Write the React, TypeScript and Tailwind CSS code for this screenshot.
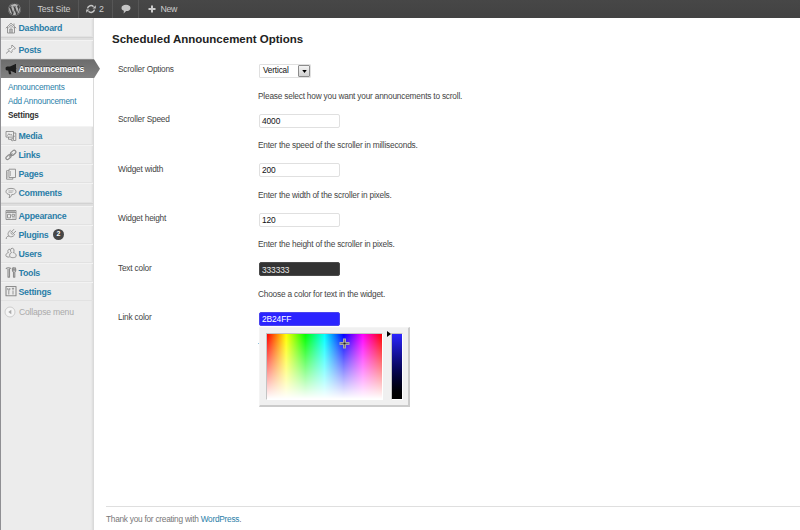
import type { ReactNode } from "react";
import { FaWordpress } from "react-icons/fa";

const svg = "h-[12px] w-[12px] shrink-0";

function Icon({ children }: { children: ReactNode }) {
  return (
    <svg viewBox="0 0 12 12" className={svg} fill="none" stroke="#8c8c8c" strokeWidth="0.9" strokeLinejoin="round">
      {children}
    </svg>
  );
}

const icons = {
  home: (
    <Icon>
      <path d="M.8 6.2 6 1.2l5.2 5M2.5 5v6h7V5M9 1.5v2.3" />
      <path d="M3.4 5.8 6 3.3l2.6 2.5M4.8 11V7h2.4v4" />
      <path d="M6 7v4M6 5v.8" />
    </Icon>
  ),
  pin: (
    <Icon>
      <path
        d="M7 1 10.500 4.300l-.9.7-.9-.3-1.700 1.700.1 1.500-.9.800-3.100-3.100.8-.9 1.500.1 1.700-1.700-.5-1zM4 6.900 1 9.500"
        fill="#f6f6f6"
      />
    </Icon>
  ),
  horn: (
    <svg viewBox="0 0 12 12" className={svg} fill="#1d1d1d">
      <path d="M10 1.200 5 3.600H2L.6 4.500v1.900l1.200 1.100h1.400l.8 3.700h2.300l-.8-3.400L10 9.800z" />
      <path d="M10.400 4.200c1.300.4 1.300 2 0 2.400zM10 1h1v9h-1z" />
    </svg>
  ),
  media: (
    <Icon>
      <path d="M1 1.500h7.500v5.600H1zM3.500 7v2.300h3M2.400 5.700l1.500-2 1.300 1.500 1-1 .8 1.500M8.500 3h2.300v7.500H8.500" />
      <circle cx="7.300" cy="9.700" r="1.100" />
      <path d="M8.400 9.500V5.800l1.400.6" />
    </Icon>
  ),
  link: (
    <Icon>
      <g strokeWidth="1.2">
        <rect x="5.2" y="2.1" width="6" height="3.4" rx="1.7" transform="rotate(-42 8.200 3.800)" />
        <rect x=".6" y="6.600" width="5.800" height="3" rx="1.500" transform="rotate(-42 3.500 8.100)" />
        <path d="m4.200 7.500 3.300-3" />
      </g>
    </Icon>
  ),
  pages: (
    <Icon>
      <path d="M4 1.200h6.500v8.300H4zM4 2.700H1.600v8.500h6.200V9.500" />
      <path d="M2.800 4v6M5.500 3v5" stroke="#b0b0b0" />
    </Icon>
  ),
  comment: (
    <Icon>
      <path d="M6 1.400c3 0 5 1.200 5 3.100S9.200 7.600 6.600 7.700c0 1.500-1 2.500-2.600 3 .6-1 .8-2 .6-3.100C2.400 7.300 1 6.200 1 4.500 1 2.600 3 1.400 6 1.400z" />
      <path d="M3.500 3.900h5M3.500 5.300h4" stroke="#aaa" />
    </Icon>
  ),
  appearance: (
    <Icon>
      <path d="M1 1.500h10v9H1zM1 3.500h10M2.500 5.300h3v3.600h-3zM7 5.300h2.600v2H7z" />
      <path d="M2 2.500h8M7 8.900h3" stroke="#aaa" />
    </Icon>
  ),
  plug: (
    <Icon>
      <path d="M5.200 2.400 9.600 6.800C8.100 8.900 5.600 9.400 4 8S2.800 4.200 5.200 2.400zM6.700 3.700 9 1.200M8.400 5.400 11 3M3.900 8.100C2.500 8 1.100 9 1.200 11M5.300 4.500l2.300 2.400" />
    </Icon>
  ),
  users: (
    <Icon>
      <path d="M6.500 5.600C4.900 4.400 5.200 1.200 7.200 1.200s2.500 3.200 1 4.400c1.900.3 3 1.500 3 3.300 0 2.100-5.600 2.300-6.400.6-.5-1.900.2-3.500 1.700-3.900zM5.100 2.300C3 1.600 2.200 4.300 3.400 5.700 1.800 6 .9 7 .9 8.500c0 1.100 1.600 1.700 3.600 1.600" />
    </Icon>
  ),
  tools: (
    <Icon>
      <path
        d="M.9 2.800C2 1.500 4.500 1.300 6.200 2.600M3 2.500v8.600h1.500V2.500M8.500 11.100V6C7 5.200 7 2.800 8.300 1.500v2.600h1.500V1.500c1.400 1.300 1.300 3.700 0 4.500v5.100z"
        strokeWidth="1.1"
      />
    </Icon>
  ),
  settings: (
    <Icon>
      <path d="M1 1.500h10v9.300H1z" strokeWidth="1.1" />
      <path d="M3.800 9.500V5.500M2.800 3v1.900h2V3M8 9.500v-4M6.900 3.300h2.200M8 3v2" />
    </Icon>
  ),
};

type Item = { icon: ReactNode; label: string; badge?: string };

function MenuItem({ icon, label, badge }: Item) {
  return (
    <div className="flex h-[19.1px] items-center border-b border-b-[#e2e2e2] border-t border-t-[#f3f3f3] pl-[3.5px] text-[8.8px] font-bold tracking-[-0.26px] text-[#2a7ea8]">
      {icon}
      <span className="ml-[2px] pt-[2px]">{label}</span>
      {badge && (
        <span className="ml-[4.5px] flex h-[11px] w-[11px] items-center justify-center rounded-full bg-[#464646] text-[7px] tracking-normal text-white">
          {badge}
        </span>
      )}
    </div>
  );
}

function Separator() {
  return <div className="h-[3px] border-t border-[#d2d2d2] bg-[#dedede]" />;
}

function Sidebar() {
  return (
    <nav className="flex w-[94px] shrink-0 flex-col border-l border-r border-l-[#8f8f93] border-r-[#dadada] bg-[#ececec] shadow-[inset_-2px_0_2px_-1px_#dcdcdc]">
      <MenuItem icon={icons.home} label="Dashboard" />
      <Separator />
      <MenuItem icon={icons.pin} label="Posts" />
      <div className="relative z-10 -mr-[7px] flex h-[19px] items-center bg-linear-to-b from-[#6b6b6b] to-[#828282] pl-[3.5px] text-[8.8px] font-bold tracking-[-0.26px] text-white [clip-path:polygon(0_0,93px_0,100%_50%,93px_100%,0_100%)]">
        {icons.horn}
        <span className="ml-[2px] pt-[1px] [text-shadow:0_-1px_0_#444]">Announcements</span>
      </div>
      <div className="flex h-[48px] flex-col bg-white pl-[7px] pt-[3px] text-[8.2px] leading-[14px] tracking-[-0.2px] text-[#2a7ea8]">
        <span>Announcements</span>
        <span>Add Announcement</span>
        <span className="font-bold text-[#333]">Settings</span>
      </div>
      <MenuItem icon={icons.media} label="Media" />
      <MenuItem icon={icons.link} label="Links" />
      <MenuItem icon={icons.pages} label="Pages" />
      <MenuItem icon={icons.comment} label="Comments" />
      <Separator />
      <MenuItem icon={icons.appearance} label="Appearance" />
      <MenuItem icon={icons.plug} label="Plugins" badge="2" />
      <MenuItem icon={icons.users} label="Users" />
      <MenuItem icon={icons.tools} label="Tools" />
      <MenuItem icon={icons.settings} label="Settings" />
      <div className="flex h-[22px] items-center pl-[3px] text-[8.6px] tracking-[-0.2px] text-[#aaa]">
        <svg viewBox="0 0 12 12" className={svg}>
          <circle cx="6" cy="6" r="5" fill="#f5f5f5" stroke="#ccc" />
          <path d="M7.300 3.800v4.400L4.300 6z" fill="#aaa" />
        </svg>
        <span className="ml-[3px] pt-[1px]">Collapse menu</span>
      </div>
    </nav>
  );
}

function AdminBar() {
  return (
    <header className="flex h-[18px] shrink-0 items-stretch bg-linear-to-b from-[#474747] to-[#424242] text-[8.8px] tracking-[-0.1px] text-[#ccc]">
      <div className="flex w-[30px] items-center justify-center border-r border-[#565656]">
        <FaWordpress className="h-[13px] w-[13px] text-[#b5b5b5]" />
      </div>
      <div className="flex w-[49px] items-center border-r border-[#565656] pl-[7.5px] pt-[1px]">Test Site</div>
      <div className="flex w-[34px] items-center border-r border-[#565656] pl-[7px]">
        <svg viewBox="0 0 10 10" className="mr-[3px] h-[10px] w-[10px]" fill="none" stroke="#c4c4c4" strokeWidth="1.5">
          <path d="M1.500 4.300A3.500 3.500 0 0 1 7.500 2.700M8.500 5.700a3.500 3.500 0 0 1-6 1.600" />
          <path d="M9.800 1.300v3.300H6.500zM.2 8.700V5.400h3.300z" fill="#c4c4c4" stroke="none" />
        </svg>
        <span className="pt-[1px]">2</span>
      </div>
      <div className="flex w-[26px] items-center justify-center border-r border-[#565656]">
        <svg viewBox="0 0 10 10" className="h-[10px] w-[10px]" fill="#c4c4c4">
          <path d="M5 .8c2.700 0 4.500 1.300 4.500 3.100S7.900 7 5.200 7.100L2.600 9.600l.3-2.900C1.400 6.200.5 5.200.5 3.900.5 2.100 2.300.8 5 .8z" />
        </svg>
      </div>
      <div className="flex items-center pl-[9px] tracking-[-0.4px]">
        <svg viewBox="0 0 8 8" className="mr-[4.5px] h-[8px] w-[8px]" fill="#ccc">
          <path d="M3 .5h2V3h2.500v2H5v2.500H3V5H.5V3H3z" />
        </svg>
        <span className="pt-[1px]">New</span>
      </div>
    </header>
  );
}

function Row({ label, help, children }: { label: string; help?: string; children: ReactNode }) {
  return (
    <div className="flex h-[49.6px]">
      <div className="w-[140px] shrink-0 pt-[0.4px] leading-[12px]">{label}</div>
      <div className="relative flex flex-col">
        {children}
        {help && <div className="mt-[11.6px] leading-[12px] whitespace-nowrap">{help}</div>}
      </div>
    </div>
  );
}

const field =
  "mt-[1px] ml-[1px] flex h-[14px] w-[81px] items-center rounded-[2px] border pl-[2px] pt-[1px] text-[8.4px] tracking-[-0.1px]";
const plain = "border-[#e0e0e0] bg-white text-[#111]";

function ColorPicker() {
  return (
    <div className="absolute left-[1px] top-[16px] flex h-[80px] w-[151px] border border-[#f4f4f4] border-b-2 border-b-[#cbcbcb] border-r-2 border-r-[#cbcbcb] bg-[#f0f0f0] pl-[6px] pt-[5px]">
      <div className="relative h-[67px] w-[117px] border border-[#c4c4c4] border-b-white border-r-white bg-[linear-gradient(to_bottom,transparent,white),linear-gradient(to_right,#f00,#ff0,#0f0,#0ff,#00f,#f0f,#f00)]">
        <svg viewBox="0 0 11 11" className="absolute left-[72px] top-[4px] h-[11px] w-[11px]">
          <path d="M5.500 .5v10M.5 5.500h10" stroke="#a9a9a9" strokeWidth="3" />
          <path d="M5.500 1.500v8M1.500 5.500h8" stroke="#77777a" strokeWidth="1" />
          <path d="M4.500 5.500h2" stroke="#222" strokeWidth="1.500" />
        </svg>
      </div>
      <svg viewBox="0 0 4 6" className="-mt-[2px] ml-[4px] h-[6px] w-[4px]">
        <path d="M0 0 4 3 0 6z" fill="#000" />
      </svg>
      <div className="h-[67px] w-[12px] border border-[#c4c4c4] border-b-white border-r-white bg-linear-to-b from-[#2b24ff] to-[#000]" />
    </div>
  );
}

function Content() {
  return (
    <main className="flex min-w-0 flex-1 flex-col bg-white">
      <h1 className="mt-[14px] ml-[18px] text-[11.5px] leading-[15px] font-bold text-[#222]">
        Scheduled Announcement Options
      </h1>
      <section className="mt-[16px] ml-[24px] flex flex-col text-[8.3px] tracking-[-0.2px] text-[#444]">
        <Row label="Scroller Options" help="Please select how you want your announcements to scroll.">
          <div className="mt-[1px] ml-[1px] flex h-[14px] w-[52px] items-center justify-between rounded-[1px] border border-[#e0e0e0] pl-[3px] text-[8.2px] tracking-[-0.15px] text-[#111]">
            Vertical
            <span className="flex h-[12px] w-[12px] items-center justify-center rounded-[1px] border border-[#8c8c8c] bg-linear-to-b from-[#f4f4f4] to-[#d0d0d0]">
              <svg viewBox="0 0 6 4" className="mt-[1px] h-[3px] w-[5px]">
                <path d="M0 0h6L3 4z" fill="#000" />
              </svg>
            </span>
          </div>
        </Row>
        <Row label="Scroller Speed" help="Enter the speed of the scroller in milliseconds.">
          <div className={`${field} ${plain}`}>4000</div>
        </Row>
        <Row label="Widget width" help="Enter the width of the scroller in pixels.">
          <div className={`${field} ${plain}`}>200</div>
        </Row>
        <Row label="Widget height" help="Enter the height of the scroller in pixels.">
          <div className={`${field} ${plain}`}>120</div>
        </Row>
        <Row label="Text color" help="Choose a color for text in the widget.">
          <div className={`${field} border-[#4a4a4a] bg-[#333] text-[#e8e8e8]`}>333333</div>
        </Row>
        <Row label="Link color">
          <div className={`${field} border-[#4a44ee] bg-[#2b24ff] text-white`}>2B24FF</div>
          <div className="mt-[17px] h-px w-px bg-[#8fc4e0]" />
          <ColorPicker />
        </Row>
      </section>
      <footer className="mt-auto ml-[12px] h-[24px] border-t border-[#dfdfdf] pt-[6px] text-[8.3px] leading-[12px] tracking-[-0.26px] text-[#777]">
        Thank you for creating with <span className="text-[#2a7ea8]">WordPress</span>.
      </footer>
    </main>
  );
}

export default function App() {
  return (
    <div className="flex h-[530px] w-[800px] flex-col overflow-hidden bg-white font-['Liberation_Sans',Arial,sans-serif]">
      <AdminBar />
      <div className="flex min-h-0 flex-1">
        <Sidebar />
        <Content />
      </div>
    </div>
  );
}
